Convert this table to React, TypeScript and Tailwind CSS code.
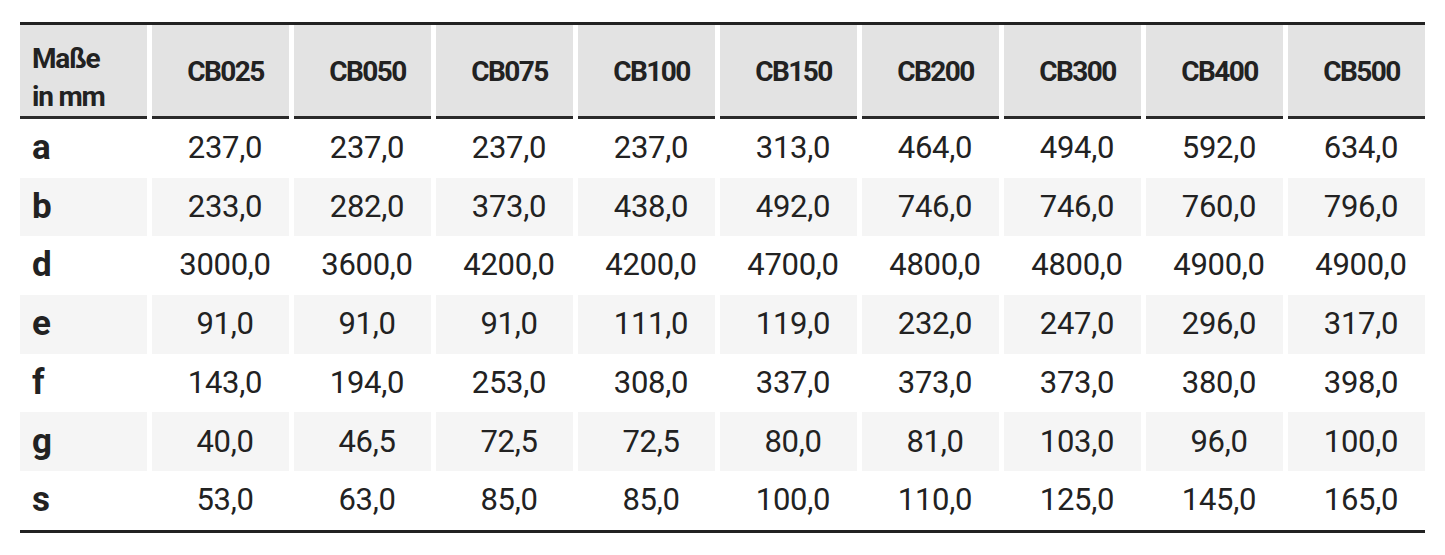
const models = ["CB025", "CB050", "CB075", "CB100", "CB150", "CB200", "CB300", "CB400", "CB500"];

const rows: { label: string; values: string[] }[] = [
  { label: "a", values: ["237,0", "237,0", "237,0", "237,0", "313,0", "464,0", "494,0", "592,0", "634,0"] },
  { label: "b", values: ["233,0", "282,0", "373,0", "438,0", "492,0", "746,0", "746,0", "760,0", "796,0"] },
  { label: "d", values: ["3000,0", "3600,0", "4200,0", "4200,0", "4700,0", "4800,0", "4800,0", "4900,0", "4900,0"] },
  { label: "e", values: ["91,0", "91,0", "91,0", "111,0", "119,0", "232,0", "247,0", "296,0", "317,0"] },
  { label: "f", values: ["143,0", "194,0", "253,0", "308,0", "337,0", "373,0", "373,0", "380,0", "398,0"] },
  { label: "g", values: ["40,0", "46,5", "72,5", "72,5", "80,0", "81,0", "103,0", "96,0", "100,0"] },
  { label: "s", values: ["53,0", "63,0", "85,0", "85,0", "100,0", "110,0", "125,0", "145,0", "165,0"] },
];

export default function App() {
  return (
    <div className="w-[1445px] h-[555px] bg-white pt-[22px] pl-[20px] text-[#222]" style={{ fontFamily: "Roboto, 'Liberation Sans', sans-serif" }}>
      <div className="w-[1405px] border-t-[3px] border-b-[3px] border-[#222]">
        <div className="grid grid-cols-[127px_repeat(9,minmax(0,1fr))] gap-x-[5px]">
          {/* header */}
          <div className="h-[94px] bg-[#e3e3e3] border-b-[3px] border-[#2a2a2a] flex flex-col justify-center pt-[14px] pl-[12px] text-[28px] font-bold leading-[38px] tracking-[-1.2px]">
            <span>Maße</span>
            <span>in mm</span>
          </div>
          {models.map((m) => (
            <div
              key={m}
              className="h-[94px] bg-[#e3e3e3] border-b-[3px] border-[#2a2a2a] flex items-center justify-center pl-[10px] pt-[2px] text-[28px] font-bold tracking-[-1.6px]"
            >
              {m}
            </div>
          ))}

          {rows.map((row, i) => {
            const bg = i % 2 === 1 ? "bg-[#f5f5f5]" : "bg-white";
            return [
              <div key={row.label} className={`${bg} h-[58.7px] flex items-center pl-[12px] text-[35px] font-bold`}>
                {row.label}
              </div>,
              ...row.values.map((v, j) => (
                <div key={row.label + j} className={`${bg} h-[58.7px] flex items-center justify-center pl-[9px] text-[31px] tracking-[-0.3px]`}>
                  {v}
                </div>
              )),
            ];
          })}
        </div>
      </div>
    </div>
  );
}
